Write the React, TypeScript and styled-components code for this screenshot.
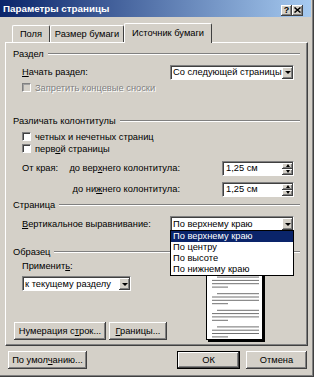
import React from 'react';
import styled, { createGlobalStyle, css } from 'styled-components';

const GlobalStyle = createGlobalStyle`
  html, body {
    margin: 0;
    padding: 0;
    background: #d4d0c8;
  }
  body {
    font-family: 'Liberation Sans', Arial, sans-serif;
    font-size: 9.3px;
    color: #000;
  }
`;

const raised = css`
  background: #d4d0c8;
  box-shadow: inset -1px -1px #404040, inset 1px 1px #fff, inset -2px -2px #808080;
`;

const sunken = css`
  border: 1px solid;
  border-color: #808080 #fff #fff #808080;
  box-shadow: inset 1px 1px #404040;
`;

export default function App() {
  return (
    <>
      <GlobalStyle />
      <Window>
        <TitleBar>
          <Title>Параметры страницы</Title>
          <CaptionButtons>
            <CaptionButton>?</CaptionButton>
            <CaptionButton>
              <svg width="7" height="6" viewBox="0 0 7 6">
                <path d="M0.5 0.5 L6.5 5.5 M6.5 0.5 L0.5 5.5" stroke="#000" strokeWidth="1.5" />
              </svg>
            </CaptionButton>
          </CaptionButtons>
        </TitleBar>

        <Body>
          <TabRow>
            <Tab $w={38}>Поля</Tab>
            <Tab $w={74}>Размер бумаги</Tab>
            <Tab $w={88} $active>
              Источник бумаги
            </Tab>
          </TabRow>

          <Panel>
            <Legend>Раздел</Legend>
            <Row $top={5}>
              <Label>
                <u>Н</u>ачать раздел:
              </Label>
              <SelectBox $w={124}>
                <SelectText>Со следующей страницы</SelectText>
                <DropButton />
              </SelectBox>
            </Row>
            <Row $top={3}>
              <Check $disabled />
              <CheckLabel $disabled>Запретить концевые сноски</CheckLabel>
            </Row>

            <Legend $top={22}>Различать колонтитулы</Legend>
            <Row $top={5}>
              <Check />
              <CheckLabel>четных и нечетных страниц</CheckLabel>
            </Row>
            <Row $top={2}>
              <Check />
              <CheckLabel>
                перв<u>о</u>й страницы
              </CheckLabel>
            </Row>
            <Row $top={7}>
              <EdgeLabel>От края:</EdgeLabel>
              <SpinLabel>
                до вер<u>х</u>него колонтитула:
              </SpinLabel>
              <SpinBox>
                <SpinText>1,25 см</SpinText>
                <SpinButtons>
                  <SpinButton $up />
                  <SpinButton />
                </SpinButtons>
              </SpinBox>
            </Row>
            <Row $top={6}>
              <EdgeLabel />
              <SpinLabel>
                до ни<u>ж</u>него колонтитула:
              </SpinLabel>
              <SpinBox>
                <SpinText>1,25 см</SpinText>
                <SpinButtons>
                  <SpinButton $up />
                  <SpinButton />
                </SpinButtons>
              </SpinBox>
            </Row>

            <Legend $top={3}>Страница</Legend>
            <Row $top={5}>
              <Label>
                <u>В</u>ертикальное выравнивание:
              </Label>
              <SelectBox $w={124}>
                <SelectText>По верхнему краю</SelectText>
                <DropButton />
                <DropList>
                  <Option $selected>По верхнему краю</Option>
                  <Option>По центру</Option>
                  <Option>По высоте</Option>
                  <Option>По нижнему краю</Option>
                </DropList>
              </SelectBox>
            </Row>

            <Legend $top={15}>Образец</Legend>
            <SampleArea>
              <SampleLeft>
                <Row $top={3}>
                  <Label>
                    Применит<u>ь</u>:
                  </Label>
                </Row>
                <Row $top={5}>
                  <SelectBox $w={109}>
                    <SelectText>к текущему разделу</SelectText>
                    <DropButton />
                  </SelectBox>
                </Row>
                <ButtonRow>
                  <Button $w={92}>
                    Нумерация с<u>т</u>рок...
                  </Button>
                  <Button $w={58}>
                    <u>Г</u>раницы...
                  </Button>
                </ButtonRow>
              </SampleLeft>
              <Page>
                <svg width="55" height="80" viewBox="0 0 55 80">
                  {[1, 17.6, 34.2, 50.8, 67.4].map((y) => (
                    <g key={y} stroke="#707070" strokeWidth="1">
                      <line x1="10" y1={y + 0.5} x2="52" y2={y + 0.5} />
                      <line x1="5" y1={y + 3.8} x2="52" y2={y + 3.8} />
                      <line x1="5" y1={y + 7.1} x2="52" y2={y + 7.1} />
                      <line x1="5" y1={y + 10.5} x2="21" y2={y + 10.5} />
                    </g>
                  ))}
                </svg>
              </Page>
            </SampleArea>
          </Panel>

          <Footer>
            <Button $w={79}>
              По умол<u>ч</u>анию...
            </Button>
            <Spacer />
            <Button $w={63} $default>
              ОК
            </Button>
            <Button $w={61}>Отмена</Button>
          </Footer>
        </Body>
      </Window>
    </>
  );
}

const Window = styled.div`
  width: 314px;
  height: 377px;
  box-sizing: border-box;
  padding: 0 3px 3px 0;
  background: #d4d0c8;
  box-shadow: inset -1px -1px #404040, inset -2px -2px #808080;
  display: flex;
  flex-direction: column;
  overflow: hidden;
`;

const TitleBar = styled.div`
  height: 17px;
  display: flex;
  align-items: center;
  padding: 0 8px 0 3px;
  background: linear-gradient(to right, #0a246a, #a6caf0);
`;

const Title = styled.span`
  flex: 1;
  color: #fff;
  font-weight: bold;
  font-size: 9.8px;
  white-space: nowrap;
`;

const CaptionButtons = styled.div`
  display: flex;
  padding-top: 3px;
`;

const CaptionButton = styled.span`
  ${raised};
  width: 11px;
  height: 11px;
  display: flex;
  align-items: center;
  justify-content: center;
  font-weight: bold;
  font-size: 9px;
  line-height: 1;
`;

const Body = styled.div`
  flex: 1;
  display: flex;
  flex-direction: column;
  padding: 6px 3px 0 5px;
`;

const TabRow = styled.div`
  height: 19px;
  display: flex;
  align-items: flex-end;
  padding-left: 7px;
`;

const Tab = styled.div<{ $w: number; $active?: boolean }>`
  width: ${(p) => p.$w}px;
  height: 17px;
  box-sizing: border-box;
  display: flex;
  align-items: center;
  justify-content: center;
  white-space: nowrap;
  background: #d4d0c8;
  border-top: 1px solid #fff;
  border-left: 1px solid #fff;
  border-right: 1px solid #404040;
  border-radius: 2px 2px 0 0;
  ${(p) =>
    p.$active &&
    css`
      height: 20px;
      margin-bottom: -1px;
      padding-bottom: 2px;
      z-index: 1;
    `}
`;

const Panel = styled.div`
  height: 304px;
  box-sizing: border-box;
  display: flex;
  flex-direction: column;
  padding: 5px 7px 5px 7px;
  border: 1px solid;
  border-color: #fff #404040 #404040 #fff;
  box-shadow: inset -1px -1px #808080;
`;

const Legend = styled.div<{ $top?: number }>`
  height: 12px;
  margin-top: ${(p) => p.$top ?? 0}px;
  display: flex;
  align-items: center;
  gap: 4px;
  white-space: nowrap;
  &::after {
    content: '';
    flex: 1;
    border-top: 1px solid #808080;
    border-bottom: 1px solid #fff;
  }
`;

const Row = styled.div<{ $top?: number }>`
  margin-top: ${(p) => p.$top ?? 0}px;
  padding: 0 6px 0 9px;
  display: flex;
  align-items: center;
  white-space: nowrap;
`;

const Label = styled.span`
  flex: 1;
`;

const SelectBox = styled.div<{ $w: number }>`
  ${sunken};
  position: relative;
  width: ${(p) => p.$w}px;
  height: 15px;
  box-sizing: border-box;
  background: #fff;
  display: flex;
  align-items: center;
`;

const SelectText = styled.span`
  flex: 1;
  padding-left: 2px;
  overflow: hidden;
`;

const DropButton = styled.span`
  ${raised};
  width: 11px;
  align-self: stretch;
  margin: 1px 0 0 0;
  display: flex;
  align-items: center;
  justify-content: center;
  &::after {
    content: '';
    border-left: 3px solid transparent;
    border-right: 3px solid transparent;
    border-top: 3px solid #000;
  }
`;

const DropList = styled.ul`
  position: absolute;
  top: 100%;
  left: -1px;
  right: -1px;
  margin: 0;
  padding: 0;
  list-style: none;
  background: #fff;
  border: 1px solid #000;
  z-index: 2;
`;

const Option = styled.li<{ $selected?: boolean }>`
  height: 11px;
  line-height: 11px;
  padding-left: 2px;
  background: ${(p) => (p.$selected ? '#0a246a' : '#fff')};
  color: ${(p) => (p.$selected ? '#fff' : '#000')};
`;

const Check = styled.span<{ $disabled?: boolean }>`
  width: 9px;
  height: 9px;
  box-sizing: border-box;
  border: 1px solid;
  border-color: #808080 #fff #fff #808080;
  box-shadow: inset 1px 1px #404040;
  background: ${(p) => (p.$disabled ? '#d4d0c8' : '#fff')};
  ${(p) =>
    p.$disabled &&
    css`
      box-shadow: inset 1px 1px #a0a0a0;
    `}
`;

const CheckLabel = styled.span<{ $disabled?: boolean }>`
  margin-left: 4px;
  color: ${(p) => (p.$disabled ? '#808080' : '#000')};
  text-shadow: ${(p) => (p.$disabled ? '1px 1px #fff' : 'none')};
`;

const EdgeLabel = styled.span`
  width: 46px;
`;

const SpinLabel = styled.span`
  width: 112px;
  text-align: right;
  margin-right: auto;
`;

const SpinBox = styled.div`
  ${sunken};
  width: 72px;
  height: 15px;
  box-sizing: border-box;
  background: #fff;
  display: flex;
  align-items: center;
`;

const SpinText = styled.span`
  flex: 1;
  padding-left: 3px;
`;

const SpinButtons = styled.div`
  width: 11px;
  align-self: stretch;
  margin-top: 1px;
  display: flex;
  flex-direction: column;
`;

const SpinButton = styled.span<{ $up?: boolean }>`
  ${raised};
  flex: 1;
  display: flex;
  align-items: center;
  justify-content: center;
  &::after {
    content: '';
    border-left: 2.5px solid transparent;
    border-right: 2.5px solid transparent;
    ${(p) =>
      p.$up
        ? css`
            border-bottom: 3px solid #000;
          `
        : css`
            border-top: 3px solid #000;
          `}
  }
`;

const SampleArea = styled.div`
  flex: 1;
  display: flex;
`;

const SampleLeft = styled.div`
  width: 193px;
  display: flex;
  flex-direction: column;
`;

const ButtonRow = styled.div`
  margin-top: auto;
  padding-left: 1px;
  display: flex;
  gap: 3px;
`;

const Page = styled.div`
  align-self: flex-end;
  width: 55px;
  height: 80px;
  background: #fff;
  border: 1px solid #000;
  box-shadow: 2px 2px 0 #000;
  svg {
    display: block;
  }
`;

const Footer = styled.div`
  margin-top: 5px;
  padding: 0 1px 0 3px;
  display: flex;
  gap: 6px;
`;

const Spacer = styled.div`
  flex: 1;
`;

const Button = styled.button<{ $w: number; $default?: boolean }>`
  ${raised};
  width: ${(p) => p.$w}px;
  height: 18px;
  padding: 0;
  border: none;
  font: inherit;
  color: #000;
  white-space: nowrap;
  ${(p) =>
    p.$default &&
    css`
      border: 1px solid #000;
    `}
`;
